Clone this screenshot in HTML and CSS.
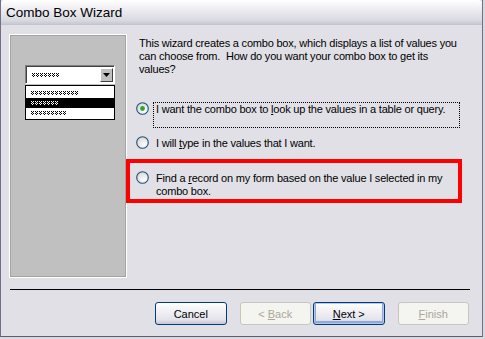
FILE: index.html
```html
<!DOCTYPE html>
<html>
<head>
  <meta name="viewport" content="width=device-width, initial-scale=1.0">
  <title>Combo Box Wizard</title>
  <link rel="stylesheet" href="styles.css">
</head>
<body>
  <!-- shared hatch patterns for the preview picture -->
  <svg class="defs" width="0" height="0">
    <defs>
      <pattern id="hatch" width="4" height="4" patternUnits="userSpaceOnUse">
        <rect x="0" y="0" width="1" height="1" fill="#000"/>
        <rect x="2" y="0" width="1" height="1" fill="#000"/>
        <rect x="1" y="1" width="1" height="1" fill="#000"/>
        <rect x="0" y="2" width="1" height="1" fill="#000"/>
        <rect x="2" y="2" width="1" height="1" fill="#000"/>
        <rect x="1" y="3" width="1" height="1" fill="#000"/>
      </pattern>
      <pattern id="hatch-white" width="4" height="4" patternUnits="userSpaceOnUse">
        <rect x="0" y="0" width="1" height="1" fill="#fff"/>
        <rect x="2" y="0" width="1" height="1" fill="#fff"/>
        <rect x="1" y="1" width="1" height="1" fill="#fff"/>
        <rect x="0" y="2" width="1" height="1" fill="#fff"/>
        <rect x="2" y="2" width="1" height="1" fill="#fff"/>
        <rect x="1" y="3" width="1" height="1" fill="#fff"/>
      </pattern>
      <radialGradient id="radio-fill" cx="0.65" cy="0.7" r="0.8">
        <stop offset="0" stop-color="#ffffff"/>
        <stop offset="1" stop-color="#d4d4d0"/>
      </radialGradient>
    </defs>
  </svg>

  <div class="window">
    <div class="titlebar">Combo Box Wizard</div>

    <div class="main">
      <!-- Picture of a combo box -->
      <div class="picture">
        <div class="combo">
          <div class="combo-field">
            <svg class="hatch" width="27" height="4"><rect width="27" height="4" fill="url(#hatch)"/></svg>
            <span class="combo-btn">
              <svg width="7" height="4"><path d="M0 0h7l-3.5 4z" fill="#000"/></svg>
            </span>
          </div>
          <div class="combo-list">
            <div class="list-row"><svg class="hatch" width="47" height="4"><rect width="47" height="4" fill="url(#hatch)"/></svg></div>
            <div class="list-row selected"><svg class="hatch" width="27" height="4"><rect width="27" height="4" fill="url(#hatch-white)"/></svg></div>
            <div class="list-row"><svg class="hatch" width="35" height="4"><rect width="35" height="4" fill="url(#hatch)"/></svg></div>
          </div>
        </div>
      </div>

      <!-- Question and choices -->
      <div class="content">
        <p class="intro">This wizard creates a combo box, which displays a list of values you<br>can choose from.&nbsp; How do you want your combo box to get its<br>values?</p>

        <div class="option first">
          <svg class="radio" width="13" height="13"><circle cx="6.5" cy="6.5" r="5.8" fill="url(#radio-fill)" stroke="#1c5180" stroke-width="1.1"/><circle cx="6.5" cy="6.5" r="2.4" fill="#2fa52f"/></svg>
          <span class="option-text focused">I want the combo box to <u>l</u>ook up the values in a table or query.</span>
        </div>

        <div class="option second">
          <svg class="radio" width="13" height="13"><circle cx="6.5" cy="6.5" r="5.8" fill="url(#radio-fill)" stroke="#1c5180" stroke-width="1.1"/></svg>
          <span class="option-text">I will <u>t</u>ype in the values that I want.</span>
        </div>

        <div class="highlight">
          <div class="option">
            <svg class="radio" width="13" height="13"><circle cx="6.5" cy="6.5" r="5.8" fill="url(#radio-fill)" stroke="#1c5180" stroke-width="1.1"/></svg>
            <span class="option-text">Find a <u>r</u>ecord on my form based on the value I selected in my<br>combo box.</span>
          </div>
        </div>
      </div>
    </div>

    <div class="separator"></div>

    <div class="buttons">
      <button class="btn">Cancel</button>
      <button class="btn back" disabled>&lt; <u>B</u>ack</button>
      <button class="btn default"><u>N</u>ext &gt;</button>
      <button class="btn finish" disabled><u>F</u>inish</button>
    </div>
  </div>
</body>
</html>
```

FILE: styles.css
```css
body {
  margin: 0;
  background-color: #d9d8de;
  font-family: "Liberation Sans", Arial, sans-serif;
  font-size: 11px;
  color: #000000;
}
.defs {
  position: absolute;
  width: 0;
  height: 0;
}
.window {
  width: 481px;
  height: 336px;
  background-color: #e1e0e6;
  border-left: 1px solid #70708c;
  border-right: 1px solid #70708c;
  border-bottom: 1px solid #5c5c74;
}
.titlebar {
  height: 25px;
  line-height: 26px;
  padding-left: 5px;
  font-size: 13.5px;
  font-family: "Liberation Sans", sans-serif;
  background: linear-gradient(#ffffff, #f1f1f5 30%, #d9d9e1 85%, #c9c9d3);
  border-bottom: 1px solid #c4c4ce;
  box-sizing: border-box;
  border-radius: 4px 4px 0 0;
}
.main {
  display: flex;
  padding: 9px 0 0 8px;
}
.picture {
  width: 100px;
  height: 211px;
  background-color: #c0c0c0;
  border: 1px solid #a3a3a3;
  box-shadow: 0 0 0 1px #ffffff;
  margin: 1px 0 0 1px;
  padding: 29px 0 0 14px;
}
.combo {
  width: 90px;
}
.combo-field {
  display: flex;
  align-items: center;
  justify-content: space-between;
  height: 13px;
  padding: 2px 1px 2px 6px;
  background-color: #ffffff;
  border-top: 1px solid #808080;
  border-left: 1px solid #808080;
  border-bottom: 1px solid #ffffff;
  border-right: 1px solid #ffffff;
  box-shadow: inset 1px 1px 0 #404040;
}
.combo-btn {
  display: flex;
  align-items: center;
  justify-content: center;
  width: 13px;
  height: 14px;
  box-sizing: border-box;
  background-color: #c0c0c0;
  border-top: 1px solid #ffffff;
  border-left: 1px solid #ffffff;
  border-right: 1px solid #404040;
  border-bottom: 1px solid #404040;
}
.combo-list {
  margin-top: 1px;
  width: 88px;
  border: 1px solid #000000;
  background-color: #ffffff;
  padding: 2px 0 1px;
}
.list-row {
  height: 10px;
  display: flex;
  align-items: center;
  padding-left: 5px;
}
.list-row.selected {
  background-color: #000000;
}
.hatch {
  display: block;
}
.content {
  margin-left: 10px;
  padding-top: 3px;
  letter-spacing: -0.2px;
}
.intro {
  margin: 0 0 0 3px;
  line-height: 13px;
}
.option {
  display: flex;
  align-items: flex-start;
}
.radio {
  flex: none;
}
.option-text {
  margin-left: 4px;
  line-height: 13px;
  padding: 0 2px;
  border: 1px solid transparent;
  white-space: nowrap;
}
.option-text.focused {
  border: 1px dotted #000000;
  width: 301px;
  height: 24px;
}
.option.first {
  margin-top: 26px;
}
.option.second {
  margin-top: 8px;
}
.highlight {
  margin: 8px 0 0 -10px;
  width: 322px;
  height: 28px;
  padding: 8px 0 0 6px;
  border: 4px solid #ff0000;
}
.separator {
  margin: 12px 0 0 9px;
  width: 460px;
  height: 1px;
  background-color: #000000;
}
.buttons {
  display: flex;
  margin: 12px 0 0 154px;
}
.btn {
  width: 72px;
  height: 23px;
  font-family: "Liberation Sans", Arial, sans-serif;
  font-size: 11px;
  color: #000000;
  border: 1px solid #003c74;
  border-radius: 3px;
  background: linear-gradient(#ffffff, #f0f0f5 40%, #e3e3ec 80%, #c5c5d6);
  padding: 0;
  margin-right: 13px;
}
.btn.back {
  margin-right: 2px;
}
.btn.default {
  box-shadow: inset 0 0 0 1px #b7c8ee, inset 0 -1px 0 2px #8fa8dc;
}
.btn:disabled {
  color: #aca899;
  border-color: #c9c7ba;
  background: #f4f4f0;
}
```
